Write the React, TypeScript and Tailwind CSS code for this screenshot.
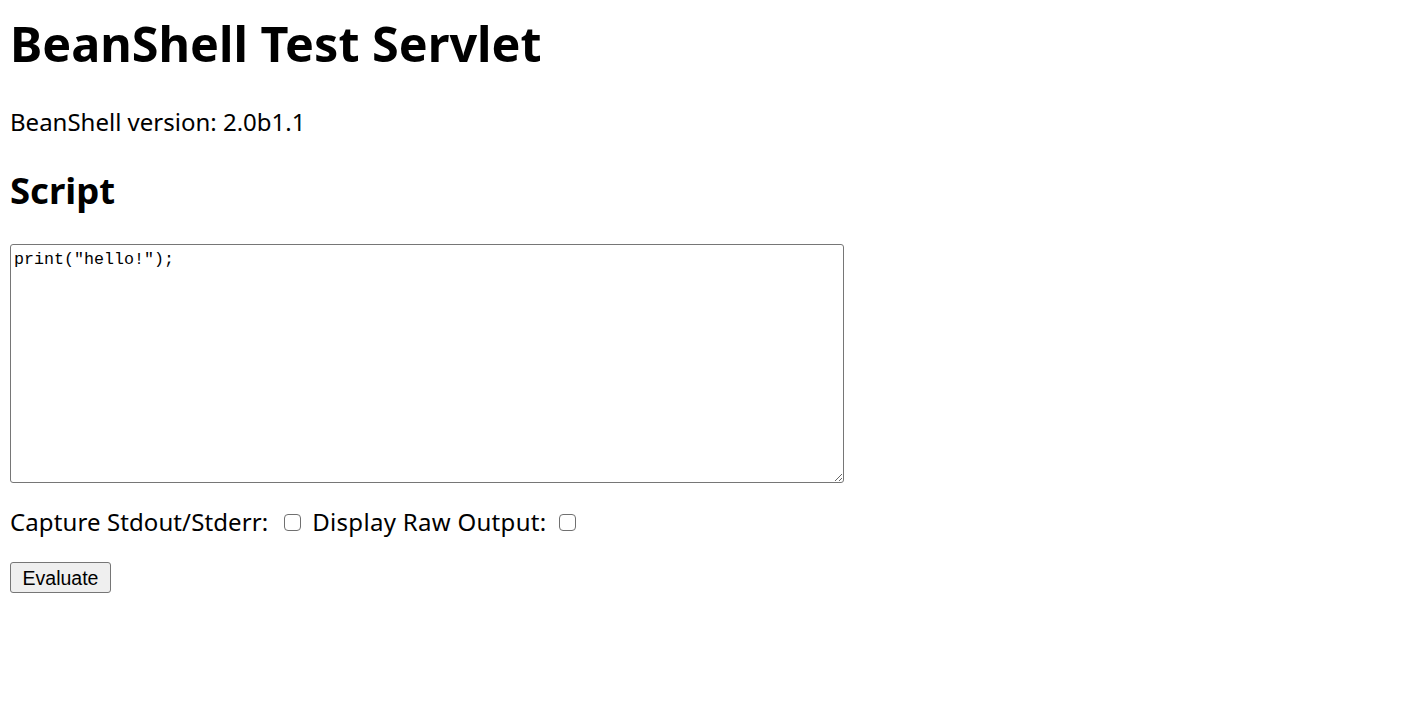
import React from "react";

const sans = "font-['Noto_Sans',sans-serif]";

function Box() {
  return (
    <span className="inline-block h-[17px] w-[17px] shrink-0 rounded-[4px] border border-[#707070] bg-white" />
  );
}

export default function App() {
  return (
    <div className={`min-h-[712px] w-full bg-white pl-[10px] text-black ${sans}`}>
      <h1 className="pt-[11px] text-[48.5px] font-bold leading-[64px]">
        BeanShell Test Servlet
      </h1>
      <p className="mt-[32px] text-[24px] leading-[30px]">
        BeanShell version: 2.0b1.1
      </p>
      <h2 className="mt-[31px] text-[36.5px] font-bold leading-[44px]">Script</h2>
      <form className="mt-[32px] flex flex-col items-start">
        <textarea
          defaultValue={'print("hello!");'}
          className="h-[239px] w-[834px] resize rounded-[3px] border border-[#767676] px-[3px] pt-[4px] pb-[2px] font-['Liberation_Mono',monospace] text-[16.67px] leading-[22px] text-black outline-none"
        />
        <label className="mt-[24px] flex items-center text-[24px] leading-[30px] tracking-[0.1px]">
          <span>Capture Stdout/Stderr:</span>
          <span className="ml-[16px] mr-[11px] flex">
            <Box />
          </span>
          <span className="tracking-[0.3px]">Display Raw Output:</span>
          <span className="ml-[13px] flex">
            <Box />
          </span>
        </label>
        <button
          type="button"
          className="mt-[25px] h-[31px] w-[101px] rounded-[3px] border border-[#767676] bg-[#efefef] font-['Liberation_Sans',Arial,sans-serif] text-[19.5px] leading-[22px] text-black"
        >
          Evaluate
        </button>
      </form>
    </div>
  );
}
